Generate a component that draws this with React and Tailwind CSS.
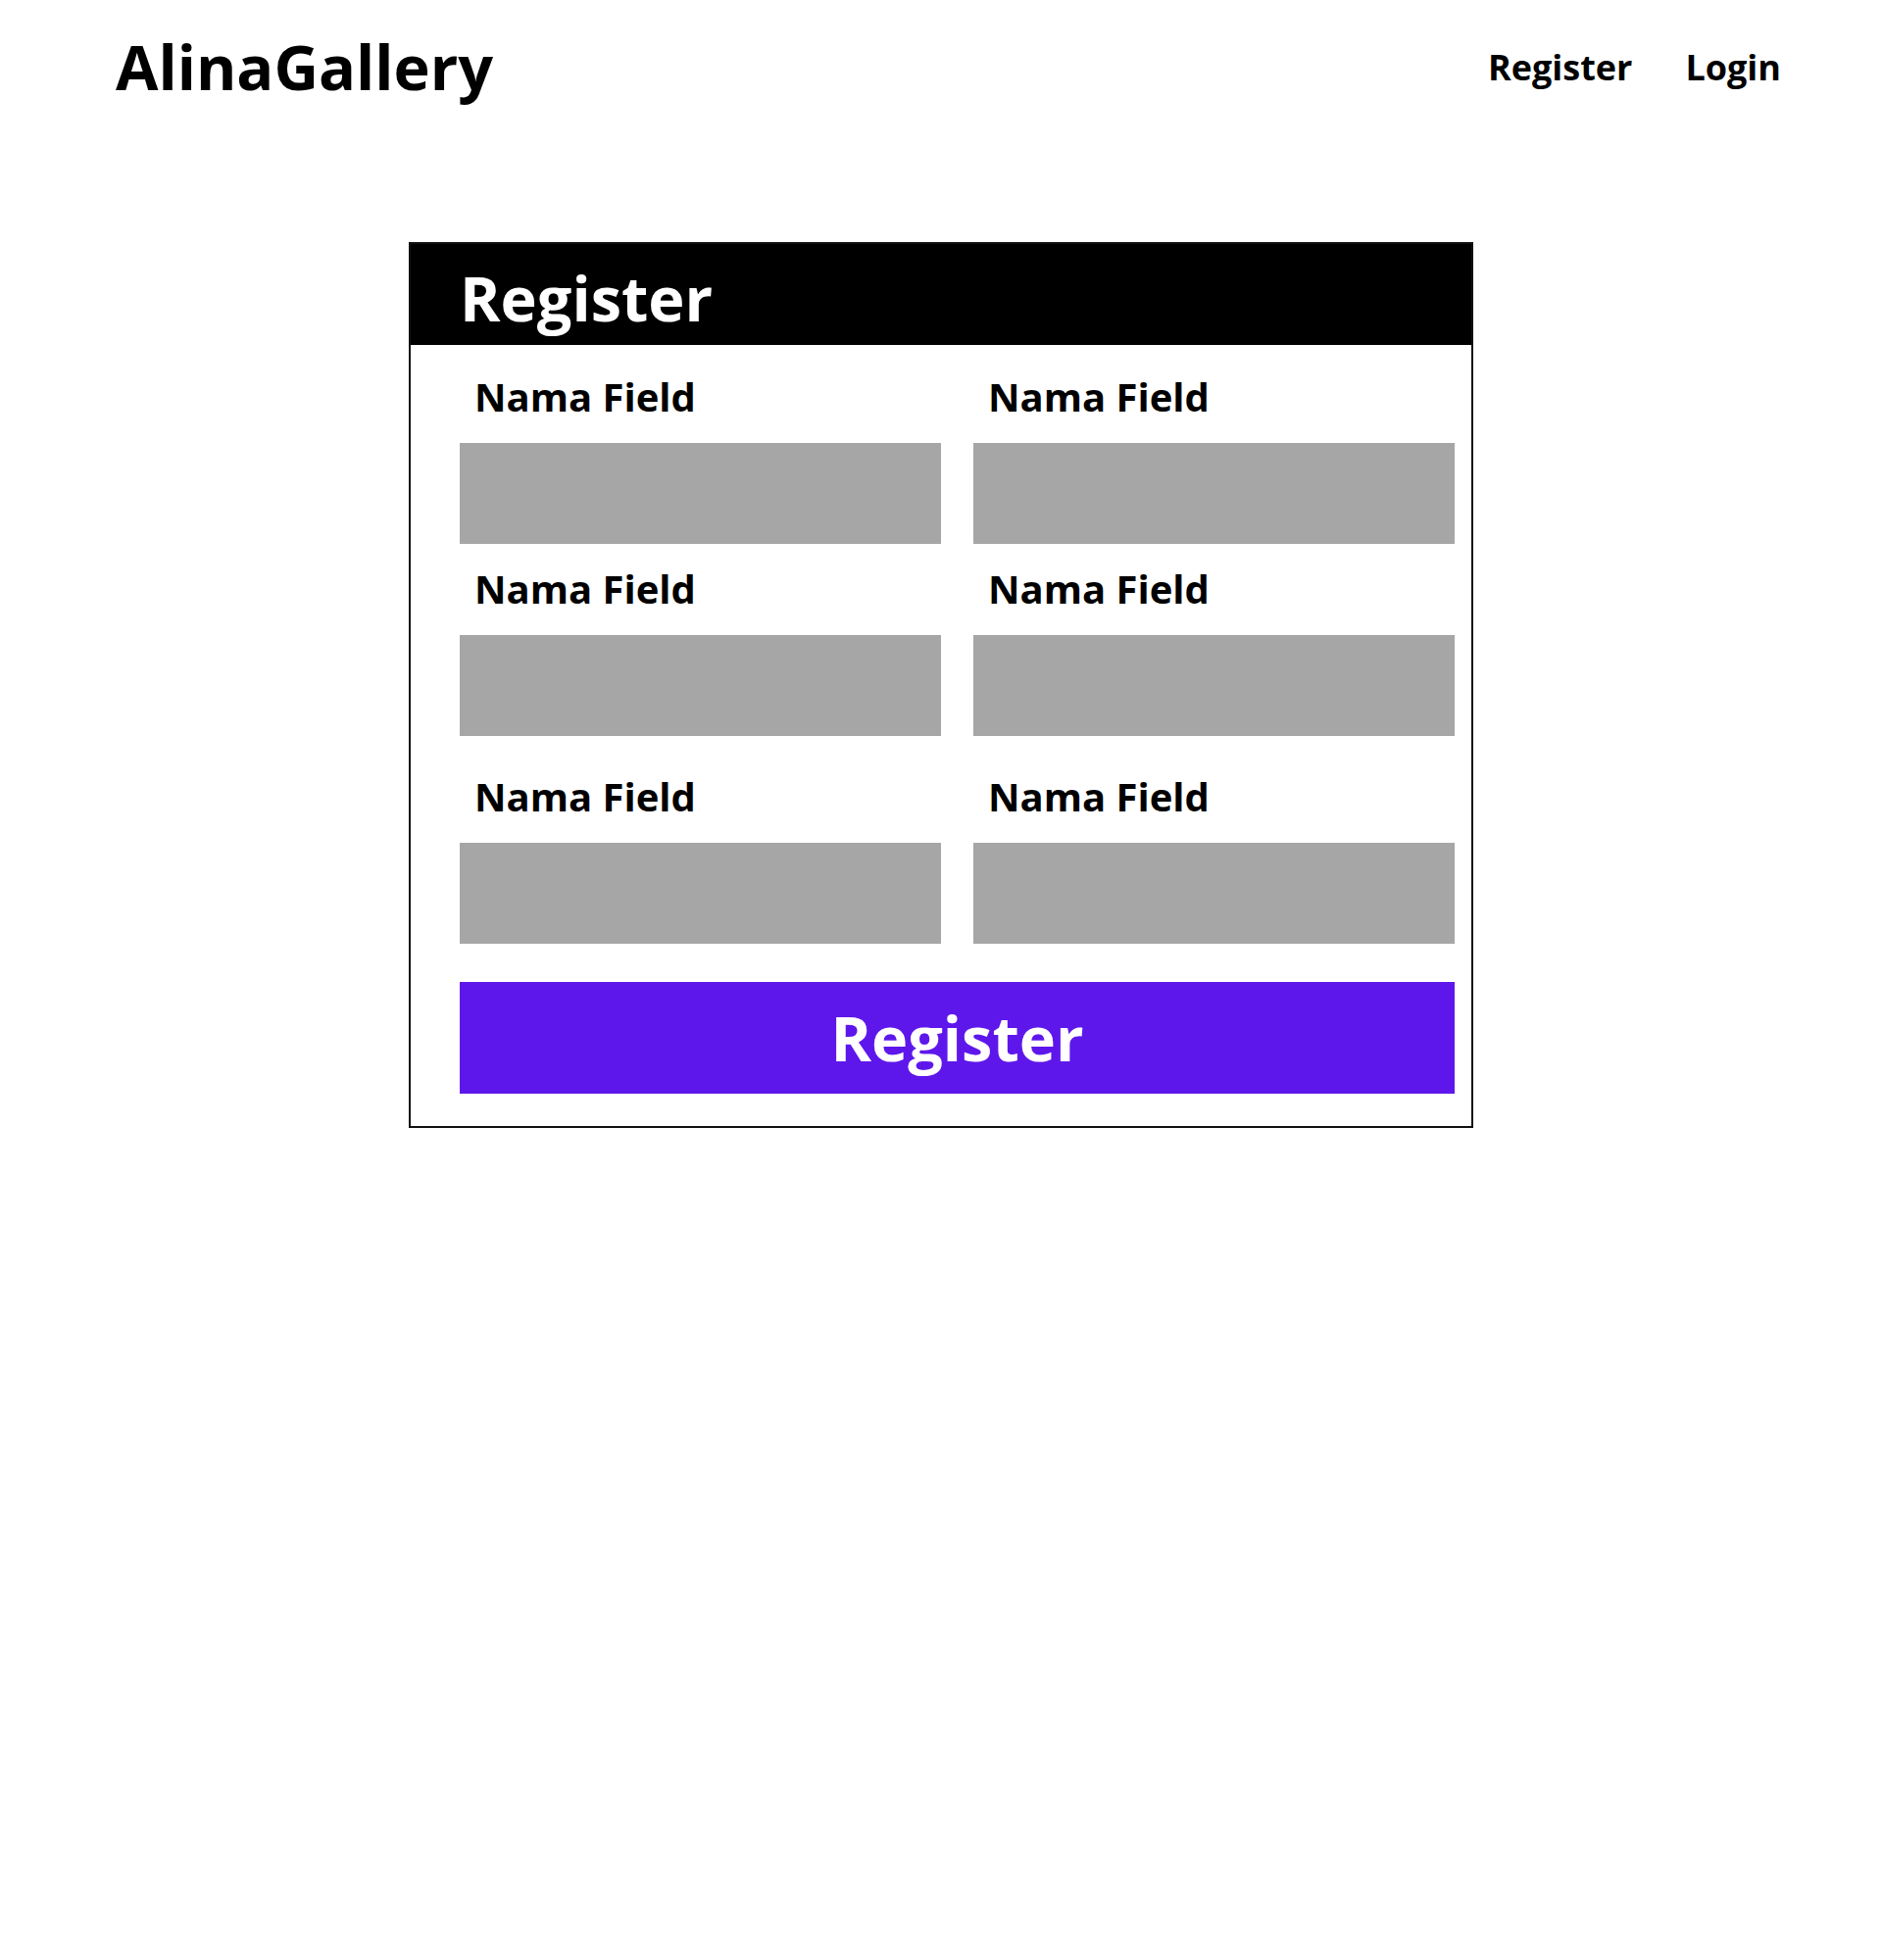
const Field = ({ label }) => (
  <div className="flex flex-col">
    <label className="pl-[15px] text-[40px] leading-[48px] font-bold text-black">{label}</label>
    <div className="mt-[23px] h-[103px] w-full bg-[#a6a6a6]" />
  </div>
);

export default function App() {
  return (
    <div className="min-h-screen bg-white font-['Open_Sans',sans-serif] text-black">
      {/* Top bar */}
      <header className="flex items-start justify-between pl-[118px] pr-[103px] pt-[21px]">
        <a href="#" className="text-[63px] font-bold leading-normal">
          AlinaGallery
        </a>
        <nav className="mt-[21px] flex items-center gap-[54px] text-[36px] font-bold leading-normal">
          <a href="#">Register</a>
          <a href="#">Login</a>
        </nav>
      </header>

      {/* Register card */}
      <div className="mx-auto mt-[131px] w-[1086px] border-2 border-[#111]">
        <div className="h-[103px] bg-black pl-[50px] pt-[8px]">
          <h1 className="text-[63px] font-bold leading-normal text-white">Register</h1>
        </div>

        <div className="pl-[50px] pr-[17px] pt-[29px] pb-[33px]">
          <div className="grid grid-cols-2 gap-x-[33px]">
            <Field label="Nama Field" />
            <Field label="Nama Field" />
          </div>
          <div className="mt-[22px] grid grid-cols-2 gap-x-[33px]">
            <Field label="Nama Field" />
            <Field label="Nama Field" />
          </div>
          <div className="mt-[38px] grid grid-cols-2 gap-x-[33px]">
            <Field label="Nama Field" />
            <Field label="Nama Field" />
          </div>

          <button className="mt-[39px] flex h-[114px] w-full items-center justify-center bg-[#5e17eb] text-[63px] font-bold leading-none text-white">
            Register
          </button>
        </div>
      </div>
    </div>
  );
}
